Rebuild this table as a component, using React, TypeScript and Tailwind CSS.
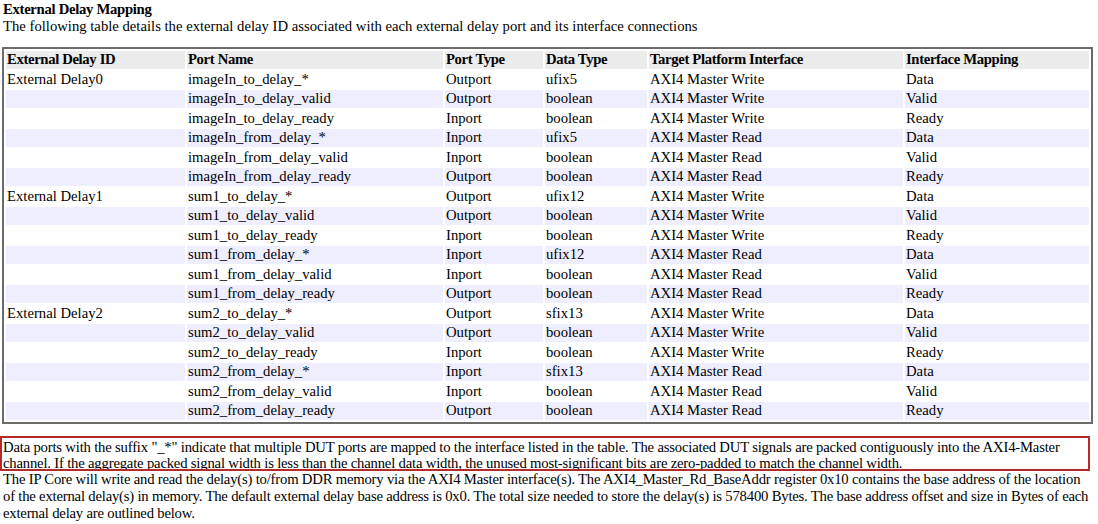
const delays = [
  { id: "External Delay0", port: "imageIn", type: "ufix5" },
  { id: "External Delay1", port: "sum1", type: "ufix12" },
  { id: "External Delay2", port: "sum2", type: "sfix13" },
];

type Row = {
  id: string;
  name: string;
  portType: string;
  dataType: string;
  target: string;
  mapping: string;
};

const rows: Row[] = delays.flatMap((d) => [
  { id: d.id, name: `${d.port}_to_delay_*`, portType: "Outport", dataType: d.type, target: "AXI4 Master Write", mapping: "Data" },
  { id: "", name: `${d.port}_to_delay_valid`, portType: "Outport", dataType: "boolean", target: "AXI4 Master Write", mapping: "Valid" },
  { id: "", name: `${d.port}_to_delay_ready`, portType: "Inport", dataType: "boolean", target: "AXI4 Master Write", mapping: "Ready" },
  { id: "", name: `${d.port}_from_delay_*`, portType: "Inport", dataType: d.type, target: "AXI4 Master Read", mapping: "Data" },
  { id: "", name: `${d.port}_from_delay_valid`, portType: "Inport", dataType: "boolean", target: "AXI4 Master Read", mapping: "Valid" },
  { id: "", name: `${d.port}_from_delay_ready`, portType: "Outport", dataType: "boolean", target: "AXI4 Master Read", mapping: "Ready" },
]);

const headers = [
  "External Delay ID",
  "Port Name",
  "Port Type",
  "Data Type",
  "Target Platform Interface",
  "Interface Mapping",
];

export default function App() {
  return (
    <div className="w-[1098px] h-[524px] overflow-hidden bg-white px-[3px] pt-[1px] text-[14.7px] leading-[17px] text-black [font-family:'Liberation_Serif',serif]">
      <p className="font-bold tracking-[-0.3px]">External Delay Mapping</p>
      <p>
        The following table details the external delay ID associated with each external delay port and its
        interface connections
      </p>

      <table className="mt-[12px] -ml-[1px] table-fixed border-separate border-spacing-[2px] border-2 border-[#6b6b6b] w-[1091px]">
        <colgroup>
          <col className="w-[179px]" />
          <col className="w-[256px]" />
          <col className="w-[98px]" />
          <col className="w-[102px]" />
          <col className="w-[254px]" />
          <col className="w-[184px]" />
        </colgroup>
        <thead>
          <tr className="bg-[#ececec]">
            {headers.map((h) => (
              <th key={h} className="p-0 pl-[1px] text-left font-bold tracking-[-0.35px] leading-[17.5px]">
                {h}
              </th>
            ))}
          </tr>
        </thead>
        <tbody>
          {rows.map((r, i) => (
            <tr key={r.name} className={i % 2 === 1 ? "bg-[#eeeeff]" : "bg-white"}>
              <td className="p-0 pl-[1px] leading-[17.5px]">{r.id}</td>
              <td className="p-0 pl-[1px] leading-[17.5px]">{r.name}</td>
              <td className="p-0 pl-[1px] leading-[17.5px]">{r.portType}</td>
              <td className="p-0 pl-[1px] leading-[17.5px]">{r.dataType}</td>
              <td className="p-0 pl-[1px] leading-[17.5px]">{r.target}</td>
              <td className="p-0 pl-[1px] leading-[17.5px]">{r.mapping}</td>
            </tr>
          ))}
        </tbody>
      </table>

      <div className="relative mt-[15px]">
        <p className="whitespace-nowrap leading-[16px] tracking-[-0.19px]">
          Data ports with the suffix "_*" indicate that multiple DUT ports are mapped to the interface listed in the
          table. The associated DUT signals are packed contiguously into the AXI4-Master
          <br />
          channel. If the aggregate packed signal width is less than the channel data width, the unused
          most-significant bits are zero-padded to match the channel width.
        </p>
        {/* highlight box drawn over the note */}
        <div className="pointer-events-none absolute -left-[3px] -top-[3px] h-[35px] w-[1090px] border-2 border-[#b52a2a]" />
      </div>
      <p className="whitespace-nowrap tracking-[-0.2px]">
        The IP Core will write and read the delay(s) to/from DDR memory via the AXI4 Master interface(s). The
        AXI4_Master_Rd_BaseAddr register 0x10 contains the base address of the location
        <br />
        of the external delay(s) in memory. The default external delay base address is 0x0. The total size needed to
        store the delay(s) is 578400 Bytes. The base address offset and size in Bytes of each
        <br />
        external delay are outlined below.
      </p>
    </div>
  );
}
